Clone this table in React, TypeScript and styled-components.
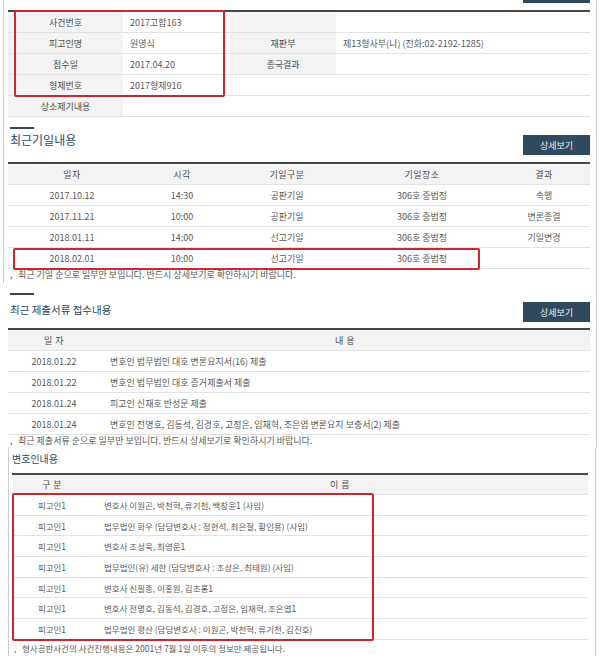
import React from "react";
import styled, { createGlobalStyle } from "styled-components";

const Global = createGlobalStyle`
  html, body { margin: 0; padding: 0; background: #fff; }
  body { font-family: "Noto Sans CJK KR", "Noto Sans", sans-serif; }
`;

const Page = styled.div`
  position: relative;
  width: 600px;
  height: 656px;
  overflow: hidden;
  background: #fff;
  color: #5a5a5a;
  font-family: "Noto Sans CJK KR", "Noto Sans", sans-serif;
`;

const Panel = styled.section<{ $ml: number; $w: number; $h: number; $pl: number; $left?: boolean }>`
  box-sizing: border-box;
  margin-left: ${(p) => p.$ml}px;
  width: ${(p) => p.$w}px;
  height: ${(p) => p.$h}px;
  padding-left: ${(p) => p.$pl}px;
  border-left: ${(p) => (p.$left ? "1px solid #cfcfcf" : "1px solid transparent")};
  border-right: 1px solid #cfcfcf;
  display: flex;
  flex-direction: column;
  overflow: hidden;
`;

const Content = styled.div<{ $w: number }>`
  width: ${(p) => p.$w}px;
  display: flex;
  flex-direction: column;
`;

const TopStrip = styled.div`
  height: 10px;
  display: flex;
  justify-content: flex-end;
  align-items: flex-start;
`;

const StubButton = styled.div`
  width: 67px;
  height: 3px;
  background: #2f4a5e;
`;

const InfoGrid = styled.div`
  display: grid;
  grid-template-columns: 115px 107px 106px 1fr;
  border-top: 2px solid #474747;
`;

const InfoLabel = styled.div`
  box-sizing: border-box;
  height: 21px;
  border-bottom: 1px solid #e2e2e2;
  background: #f3f3f3;
  color: #4d4d4d;
  font-size: 9px;
  display: flex;
  align-items: center;
  justify-content: center;
`;

const InfoValue = styled.div<{ $span?: number }>`
  box-sizing: border-box;
  height: 21px;
  border-bottom: 1px solid #e2e2e2;
  grid-column: span ${(p) => p.$span ?? 1};
  padding-left: 7px;
  font-size: 9px;
  color: #5a5a5a;
  display: flex;
  align-items: center;
  white-space: nowrap;
`;

const SectionHead = styled.div<{ $h: number; $pt: number }>`
  box-sizing: border-box;
  height: ${(p) => p.$h}px;
  padding-top: ${(p) => p.$pt}px;
  display: flex;
  justify-content: space-between;
  align-items: flex-start;
`;

const TitleBlock = styled.div`
  display: flex;
  flex-direction: column;
  padding-left: 2px;
`;

const Accent = styled.div`
  width: 24px;
  height: 2px;
  background: #3b4650;
`;

const Title = styled.h2<{ $size: number; $mt: number }>`
  margin: ${(p) => p.$mt}px 0 0 0;
  font-size: ${(p) => p.$size}px;
  line-height: 16px;
  font-weight: 400;
  color: #2b4a63;
  white-space: nowrap;
`;

const DetailButton = styled.button<{ $mt: number }>`
  margin-top: ${(p) => p.$mt}px;
  width: 67px;
  height: 20px;
  border: 0;
  padding: 0;
  background: #2f4a5e;
  color: #e8edf1;
  font-family: inherit;
  font-size: 9px;
`;

const DataTable = styled.div<{ $cols: string }>`
  display: grid;
  grid-template-columns: ${(p) => p.$cols};
  border-top: 2px solid #474747;
`;

const HeadCell = styled.div<{ $h: number }>`
  box-sizing: border-box;
  height: ${(p) => p.$h}px;
  border-bottom: 1px solid #e2e2e2;
  background: #f3f3f3;
  color: #4d4d4d;
  font-size: 9px;
  display: flex;
  align-items: center;
  justify-content: center;
  letter-spacing: 0.5px;
`;

const Cell = styled.div<{ $h: number; $left?: boolean; $pl?: number; $fs?: number }>`
  box-sizing: border-box;
  height: ${(p) => p.$h}px;
  border-bottom: 1px solid #e2e2e2;
  font-size: ${(p) => p.$fs ?? 9}px;
  color: #5a5a5a;
  display: flex;
  align-items: center;
  justify-content: ${(p) => (p.$left ? "flex-start" : "center")};
  padding-left: ${(p) => p.$pl ?? 0}px;
  white-space: nowrap;
`;

const Note = styled.p<{ $size: number; $mt: number }>`
  margin: ${(p) => p.$mt}px 0 0 2px;
  font-size: ${(p) => p.$size}px;
  line-height: 12px;
  color: #5a5a5a;
  white-space: nowrap;
  &::before {
    content: ",";
    display: inline-block;
    width: 8px;
    color: #555;
  }
`;

const Highlight = styled.div<{ $x: number; $y: number; $w: number; $h: number }>`
  position: absolute;
  left: ${(p) => p.$x}px;
  top: ${(p) => p.$y}px;
  width: ${(p) => p.$w}px;
  height: ${(p) => p.$h}px;
  box-sizing: border-box;
  border: 2px solid #cc2631;
  border-radius: 2px;
  pointer-events: none;
`;

const hearings = [
  ["2017.10.12", "14:30", "공판기일", "306호 중법정", "속행"],
  ["2017.11.21", "10:00", "공판기일", "306호 중법정", "변론종결"],
  ["2018.01.11", "14:00", "선고기일", "306호 중법정", "기일변경"],
  ["2018.02.01", "10:00", "선고기일", "306호 중법정", ""],
];

const filings = [
  ["2018.01.22", "변호인 법무법인 대호 변론요지서(16) 제출"],
  ["2018.01.22", "변호인 법무법인 대호 증거제출서 제출"],
  ["2018.01.24", "피고인 신재호 반성문 제출"],
  ["2018.01.24", "변호인 전명호, 김동석, 김경호, 고정은, 임재혁, 조은엽 변론요지 보충서(2) 제출"],
];

const lawyers = [
  "변호사 이원곤, 박천혁, 류기천, 백창윤1 (사임)",
  "법무법인 화우 (담당변호사 : 정현석, 최은철, 황인용) (사임)",
  "변호사 조성욱, 최영운1",
  "법무법인(유) 세한 (담당변호사 : 조성은, 최태원) (사임)",
  "변호사 신필종, 이홍원, 김초롱1",
  "변호사 전명호, 김동석, 김경호, 고정은, 임재혁, 조은엽1",
  "법무법인 평산 (담당변호사 : 이원곤, 박천혁, 류기천, 김진호)",
];

export default function App() {
  return (
    <Page>
      <Global />
      <Panel $ml={3} $w={594} $h={283} $pl={4} $left>
        <Content $w={582}>
          <TopStrip>
            <StubButton />
          </TopStrip>
          <InfoGrid>
            <InfoLabel>사건번호</InfoLabel>
            <InfoValue>2017고합163</InfoValue>
            <InfoLabel />
            <InfoValue />
            <InfoLabel>피고인명</InfoLabel>
            <InfoValue>원영식</InfoValue>
            <InfoLabel>재판부</InfoLabel>
            <InfoValue>제13형사부(나) (전화:02-2192-1285)</InfoValue>
            <InfoLabel>접수일</InfoLabel>
            <InfoValue>2017.04.20</InfoValue>
            <InfoLabel>종국결과</InfoLabel>
            <InfoValue />
            <InfoLabel>형제번호</InfoLabel>
            <InfoValue $span={3}>2017형제916</InfoValue>
            <InfoLabel>상소제기내용</InfoLabel>
            <InfoValue $span={3} />
          </InfoGrid>
          <SectionHead $h={45} $pt={10}>
            <TitleBlock>
              <Accent />
              <Title $size={12} $mt={3}>최근기일내용</Title>
            </TitleBlock>
            <DetailButton $mt={8}>상세보기</DetailButton>
          </SectionHead>
          <DataTable $cols="128px 92px 118px 152px 1fr">
            {["일자", "시각", "기일구분", "기일장소", "결과"].map((h) => (
              <HeadCell key={h} $h={21}>{h}</HeadCell>
            ))}
            {hearings.map((r, i) =>
              r.map((c, j) => (
                <Cell key={`${i}-${j}`} $h={21}>{c}</Cell>
              ))
            )}
          </DataTable>
          <Note $size={9} $mt={0}>최근 기일 순으로 일부만 보입니다. 반드시 상세보기로 확인하시기 바랍니다.</Note>
        </Content>
      </Panel>

      <Panel $ml={0} $w={597} $h={164} $pl={7}>
        <Content $w={582}>
          <SectionHead $h={45} $pt={10}>
            <TitleBlock>
              <Accent />
              <Title $size={10.5} $mt={7}>최근 제출서류 접수내용</Title>
            </TitleBlock>
            <DetailButton $mt={9}>상세보기</DetailButton>
          </SectionHead>
          <DataTable $cols="92px 1fr">
            <HeadCell $h={21}>일 자</HeadCell>
            <HeadCell $h={21}>내 용</HeadCell>
            {filings.map((r, i) => (
              <React.Fragment key={i}>
                <Cell $h={21}>{r[0]}</Cell>
                <Cell $h={21} $left $pl={10}>{r[1]}</Cell>
              </React.Fragment>
            ))}
          </DataTable>
          <Note $size={9} $mt={0}>최근 제출서류 순으로 일부만 보입니다. 반드시 상세보기로 확인하시기 바랍니다.</Note>
        </Content>
      </Panel>

      <Panel $ml={8} $w={588} $h={209} $pl={3} $left>
        <Content $w={576}>
          <SectionHead $h={26} $pt={4}>
            <Title $size={10} $mt={0}>변호인내용</Title>
          </SectionHead>
          <DataTable $cols="80px 1fr">
            <HeadCell $h={20}>구 분</HeadCell>
            <HeadCell $h={20}>이 름</HeadCell>
            {lawyers.map((n, i) => (
              <React.Fragment key={i}>
                <Cell $h={20.7} $fs={8.5}>피고인1</Cell>
                <Cell $h={20.7} $fs={8.5} $left $pl={12}>{n}</Cell>
              </React.Fragment>
            ))}
          </DataTable>
          <Note $size={8.5} $mt={2}>형사공판사건의 사건진행내용은 2001년 7월 1일 이후의 정보만 제공됩니다.</Note>
        </Content>
      </Panel>

      <Highlight $x={14} $y={10} $w={211} $h={87} />
      <Highlight $x={13} $y={248} $w={467} $h={22} />
      <Highlight $x={12} $y={493} $w={362} $h={148} />
    </Page>
  );
}
